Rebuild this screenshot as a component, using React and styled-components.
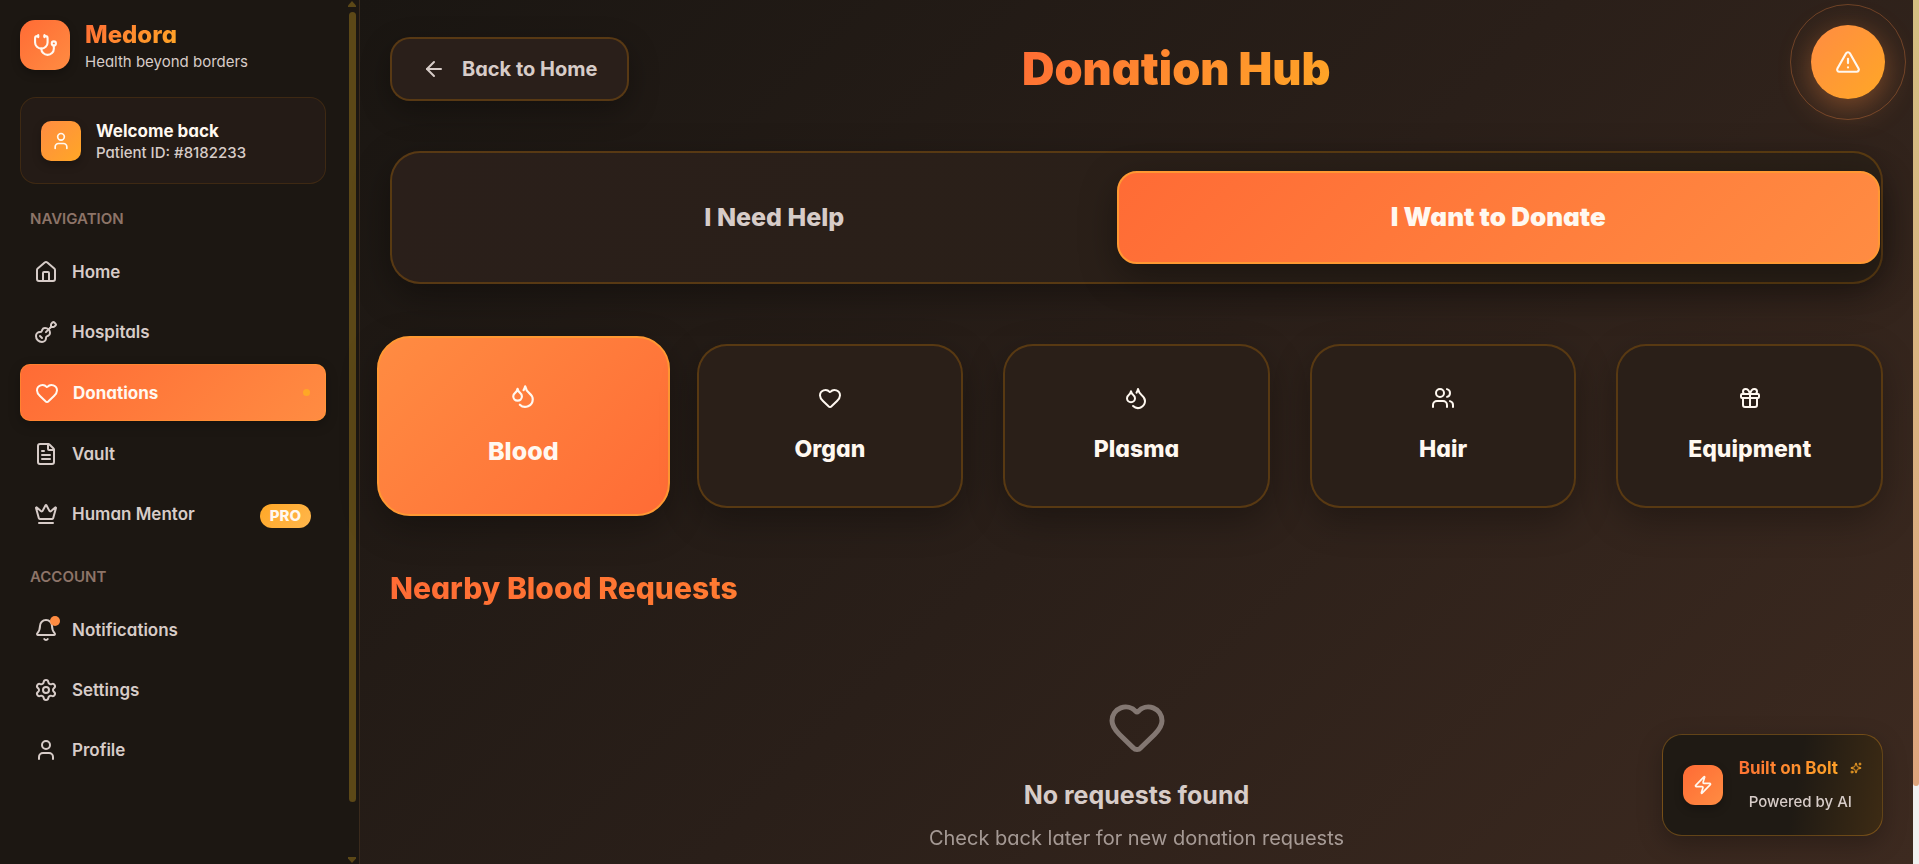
import React from 'react';
import styled, { createGlobalStyle, css } from 'styled-components';
import {
  ArrowLeft, Bell, Crown, Droplets, FileText, Gift, Guitar, Heart, House,
  Settings, Sparkles, Stethoscope, TriangleAlert, User, Users, Zap,
} from 'lucide-react';

const GlobalStyle = createGlobalStyle`
  *, *::before, *::after { box-sizing: border-box; }
  body {
    margin: 0;
    background: #1a1612;
    color: #fff8f0;
    font-family: Inter, "Liberation Sans", sans-serif;
    font-feature-settings: "cv11";
  }
  h1, h2, h3, p { margin: 0; }
  button { font: inherit; font-feature-settings: inherit; color: inherit; cursor: pointer; }
  a { color: inherit; text-decoration: none; }
  svg { display: block; flex: none; }
`;

const muted = '#d7ccc8';
const line = 'rgba(255, 152, 0, 0.22)';
const flame = 'linear-gradient(135deg, #ff6b35, #ff8c42)';
const amber = 'linear-gradient(135deg, #ff8c42, #ffa726)';

const gradientText = css`
  background: linear-gradient(135deg, #ff6b35, #ff8c2e 50%, #ffa726);
  background-clip: text;
  -webkit-background-clip: text;
  color: transparent;
`;

const Page = styled.div`
  display: flex;
  height: 100vh;
  overflow: hidden;
`;

const Sidebar = styled.aside`
  display: flex;
  flex: none;
  width: 360px;
  background: #1c1712;
  border-right: 1px solid #3a2a1c;
`;

const SidebarBody = styled.div`
  flex: 1;
  padding: 20px 22px 20px 20px;
`;

const SidebarRail = styled.div`
  display: flex;
  flex-direction: column;
  align-items: center;
  width: 11px;
  padding: 1px 3px 1px 0;
`;

const SidebarThumb = styled.div`
  width: 7px;
  height: calc(91vh + 4px);
  margin: 5px 0 auto;
  border-radius: 4px;
  background: #5c4817;
`;

const RailArrow = styled.svg`
  width: 8px;
  height: 6px;
  fill: #5c4817;
`;

const Brand = styled.div`
  display: flex;
  align-items: center;
  gap: 15px;
  height: 50px;
  margin-bottom: 27px;
`;

const IconTile = styled.div`
  display: flex;
  align-items: center;
  justify-content: center;
  flex: none;
  width: ${(p) => p.$size}px;
  height: ${(p) => p.$size}px;
  border-radius: ${(p) => p.$radius}px;
  background: ${(p) => p.$fill};
  color: #fff8f0;
  box-shadow: 0 4px 8px rgba(0, 0, 0, 0.25);
`;

const TileText = styled.div`
  padding-top: 4px;
`;

const BrandName = styled.div`
  ${gradientText}
  width: fit-content;
  font-size: 24px;
  font-weight: 800;
  line-height: 30px;
`;

const SmallText = styled.p`
  color: ${muted};
  font-size: 15px;
  line-height: 24px;
`;

const WelcomeCard = styled.section`
  display: flex;
  align-items: center;
  gap: 15px;
  height: 87px;
  padding: 0 20px;
  border: 1px solid rgba(255, 152, 0, 0.12);
  border-radius: 16px;
  background: #241b16;
`;

const WelcomeTitle = styled.p`
  font-size: 17px;
  font-weight: 700;
  line-height: 21px;
`;

const PatientId = styled(SmallText)`
  font-weight: 500;
  line-height: 22px;
`;

const Section = styled.section`
  margin-top: 26px;
`;

const NavLabel = styled.h2`
  padding-left: 10px;
  color: #8d7468;
  font-size: 15px;
  font-weight: 600;
  line-height: 18px;
  text-transform: uppercase;
`;

const NavGroup = styled.nav`
  display: flex;
  flex-direction: column;
  gap: 4px;
  margin: 16px 0 23px;
`;

const NavRow = styled.a`
  display: flex;
  align-items: center;
  gap: 14px;
  height: 56px;
  padding: 0 14px;
  border-radius: 10px;
  color: ${muted};
  font-size: 17px;
  font-weight: 600;
  line-height: 24px;
  ${(p) => p.$active && css`
    height: 57px;
    margin-bottom: 1px;
    padding-left: 15px;
    background: ${flame};
    color: #fff8f0;
    font-weight: 700;
    box-shadow: 0 4px 12px rgba(0, 0, 0, 0.25), inset 0 0 0 1px rgba(255, 167, 38, 0.35);
  `}
`;

const ActiveDot = styled.span`
  width: 7px;
  height: 7px;
  margin: 0 2px 0 auto;
  border-radius: 50%;
  background: #ffa726;
`;

const ProBadge = styled.span`
  margin: 4px 1px 0 auto;
  padding: 0 10px;
  border-radius: 12px;
  background: linear-gradient(135deg, #ffa726, #ffb74d);
  color: #fff8f0;
  font-size: 15px;
  font-weight: 800;
`;

const IconWithDot = styled.span`
  position: relative;
`;

const AlertDot = styled.span`
  position: absolute;
  top: -2px;
  right: -2px;
  width: 10px;
  height: 10px;
  border-radius: 50%;
  background: #ff8c42;
`;

const Main = styled.main`
  flex: 1;
  min-width: 0;
  padding: 37px 30px 0;
  background: linear-gradient(135deg, #1a1612 0%, #2a1f19 50%, #3d2a20 100%);
`;

const Header = styled.header`
  display: flex;
  align-items: center;
  justify-content: space-between;
  margin-bottom: 50px;
`;

const BackButton = styled.button`
  display: flex;
  align-items: center;
  gap: 16px;
  height: 64px;
  padding: 0 30px;
  border: 2px solid ${line};
  border-radius: 20px;
  background: #2a1f1a;
  color: ${muted};
  font-size: 20px;
  font-weight: 700;
  box-shadow: 0 10px 30px rgba(0, 0, 0, 0.3);
`;

const Title = styled.h1`
  ${gradientText}
  font-size: 45px;
  font-weight: 900;
  line-height: 58px;
`;

const HeaderSpacer = styled.div`
  width: 160px;
`;

const Tabs = styled.div`
  display: grid;
  grid-template-columns: 1fr 1fr;
  padding: 20px;
  border: 2px solid ${line};
  border-radius: 30px;
  background: linear-gradient(120deg, #2a1f1a, #2a2017);
  box-shadow: 0 12px 36px rgba(0, 0, 0, 0.35);
`;

const Tab = styled.button`
  height: 89px;
  padding: 0 0 2px;
  border: 0;
  border-radius: 20px;
  background: none;
  color: ${muted};
  font-size: 25px;
  font-weight: 800;
  ${(p) => p.$active && css`
    height: 93px;
    margin: -2px -19px -2px -20px;
    border: 2px solid #ff9833;
    background: ${flame} border-box;
    color: #fff8f0;
    font-size: 26px;
    font-weight: 900;
    box-shadow: 0 12px 36px rgba(0, 0, 0, 0.35);
  `}
`;

const Categories = styled.div`
  display: grid;
  grid-template-columns: repeat(5, 1fr);
  gap: 40px;
  margin: 60px 0;
`;

const Category = styled.button`
  display: flex;
  flex-direction: column;
  align-items: center;
  justify-content: center;
  gap: 25px;
  height: 164px;
  padding: 0 0 3px;
  border: 2px solid ${line};
  border-radius: 30px;
  background: #2a1f18;
  color: #fff8f0;
  font-size: 23px;
  font-weight: 800;
  line-height: 28px;
  box-shadow: 0 12px 36px rgba(0, 0, 0, 0.3);
  ${(p) => p.$active && css`
    gap: 28px;
    height: 180px;
    margin: -8px -13px;
    padding-bottom: 4px;
    border-color: #ff9833;
    border-radius: 33px;
    background: linear-gradient(135deg, #ff8c42, #ff6b35) border-box;
    font-size: 25px;
  `}
`;

const SectionTitle = styled.h2`
  ${gradientText}
  font-size: 30px;
  font-weight: 800;
  line-height: 40px;
`;

const Empty = styled.section`
  display: flex;
  flex-direction: column;
  align-items: center;
  margin-top: 89px;
  color: ${muted};
  text-align: center;

  svg { opacity: 0.5; margin-bottom: 22px; }
`;

const EmptyTitle = styled.h3`
  font-size: 25px;
  font-weight: 700;
  line-height: 32px;
  margin-bottom: 13px;
`;

const EmptyText = styled.p`
  opacity: 0.7;
  font-size: 20px;
  line-height: 28px;
`;

const PageRail = styled.div`
  flex: none;
  width: 6px;
  background: #f1f1f1;
`;

const PageThumb = styled.div`
  height: 91vh;
  border-radius: 0 0 3px 3px;
  background: linear-gradient(#d4bf83, #dfa67f);
`;

const AlertButton = styled.button`
  position: fixed;
  top: 25px;
  right: 34px;
  display: flex;
  align-items: center;
  justify-content: center;
  width: 74px;
  height: 74px;
  border: 0;
  border-radius: 50%;
  background: ${amber};
  color: #fff8f0;
  box-shadow: 0 8px 32px rgba(255, 140, 66, 0.4);

  &::after {
    content: "";
    position: absolute;
    inset: -21px;
    border: 1px solid rgba(255, 140, 66, 0.3);
    border-radius: 50%;
  }
`;

const BoltBadge = styled.a`
  position: fixed;
  right: 36px;
  bottom: 28px;
  display: flex;
  align-items: center;
  gap: 16px;
  height: 102px;
  padding: 0 20px;
  border: 1px solid rgba(255, 167, 38, 0.3);
  border-radius: 20px;
  background: linear-gradient(100deg, #1f1a14 60%, #3d2b14);
  box-shadow: 0 8px 24px rgba(0, 0, 0, 0.25);
`;

const BoltText = styled.div`
  display: flex;
  flex-direction: column;
  align-items: center;
  gap: 10px;
`;

const BoltTitle = styled.div`
  display: flex;
  align-items: center;
  gap: 12px;
  color: #ffa726;
  font-size: 17px;
  font-weight: 700;
  line-height: 24px;

  span { ${gradientText} }
`;

const BoltSub = styled(SmallText)`
  font-weight: 500;
`;

const navigation = [
  { label: 'Home', Icon: House },
  { label: 'Hospitals', Icon: Guitar },
  { label: 'Donations', Icon: Heart, active: true },
  { label: 'Vault', Icon: FileText },
  { label: 'Human Mentor', Icon: Crown, pro: true },
];

const account = [
  { label: 'Notifications', Icon: Bell, alert: true },
  { label: 'Settings', Icon: Settings },
  { label: 'Profile', Icon: User },
];

const categories = [
  { label: 'Blood', Icon: Droplets, active: true },
  { label: 'Organ', Icon: Heart },
  { label: 'Plasma', Icon: Droplets },
  { label: 'Hair', Icon: Users },
  { label: 'Equipment', Icon: Gift },
];

function NavItem({ label, Icon, active, pro, alert }) {
  return (
    <NavRow href="#" $active={active} aria-current={active ? 'page' : undefined}>
      <IconWithDot>
        <Icon size={24} />
        {alert && <AlertDot />}
      </IconWithDot>
      {label}
      {active && <ActiveDot />}
      {pro && <ProBadge>PRO</ProBadge>}
    </NavRow>
  );
}

function NavSection({ label, items }) {
  return (
    <Section>
      <NavLabel>{label}</NavLabel>
      <NavGroup aria-label={label}>
        {items.map((item) => <NavItem key={item.label} {...item} />)}
      </NavGroup>
    </Section>
  );
}

export default function App() {
  return (
    <Page>
      <GlobalStyle />
      <Sidebar>
        <SidebarBody>
          <Brand>
            <IconTile $size={50} $radius={15} $fill={flame}><Stethoscope size={25} /></IconTile>
            <TileText>
              <BrandName>Medora</BrandName>
              <SmallText>Health beyond borders</SmallText>
            </TileText>
          </Brand>
          <WelcomeCard>
            <IconTile $size={40} $radius={10} $fill={amber}><User size={20} /></IconTile>
            <TileText>
              <WelcomeTitle>Welcome back</WelcomeTitle>
              <PatientId>Patient ID: #8182233</PatientId>
            </TileText>
          </WelcomeCard>
          <NavSection label="Navigation" items={navigation} />
          <NavSection label="Account" items={account} />
        </SidebarBody>
        <SidebarRail aria-hidden="true">
          <RailArrow viewBox="0 0 8 6"><path d="M4 0 8 4.500V6H0V4.500z" /></RailArrow>
          <SidebarThumb />
          <RailArrow viewBox="0 0 8 6"><path d="M0 0H8V1.500L4 6 0 1.500z" /></RailArrow>
        </SidebarRail>
      </Sidebar>

      <Main>
        <Header>
          <BackButton type="button"><ArrowLeft size={24} />Back to Home</BackButton>
          <Title>Donation Hub</Title>
          <HeaderSpacer />
        </Header>
        <Tabs role="tablist">
          <Tab type="button" role="tab" aria-selected="false">I Need Help</Tab>
          <Tab type="button" role="tab" aria-selected="true" $active>I Want to Donate</Tab>
        </Tabs>
        <Categories>
          {categories.map(({ label, Icon, active }) => (
            <Category key={label} type="button" $active={active}>
              <Icon size={active ? 26 : 24} />
              {label}
            </Category>
          ))}
        </Categories>
        <SectionTitle>Nearby Blood Requests</SectionTitle>
        <Empty>
          <Heart size={60} />
          <EmptyTitle>No requests found</EmptyTitle>
          <EmptyText>Check back later for new donation requests</EmptyText>
        </Empty>
      </Main>
      <PageRail aria-hidden="true"><PageThumb /></PageRail>

      <AlertButton type="button" aria-label="Emergency alert"><TriangleAlert size={26} /></AlertButton>
      <BoltBadge href="#">
        <IconTile $size={40} $radius={12} $fill={flame}><Zap size={20} /></IconTile>
        <BoltText>
          <BoltTitle><span>Built on Bolt</span><Sparkles size={12} /></BoltTitle>
          <BoltSub>Powered by AI</BoltSub>
        </BoltText>
      </BoltBadge>
    </Page>
  );
}
